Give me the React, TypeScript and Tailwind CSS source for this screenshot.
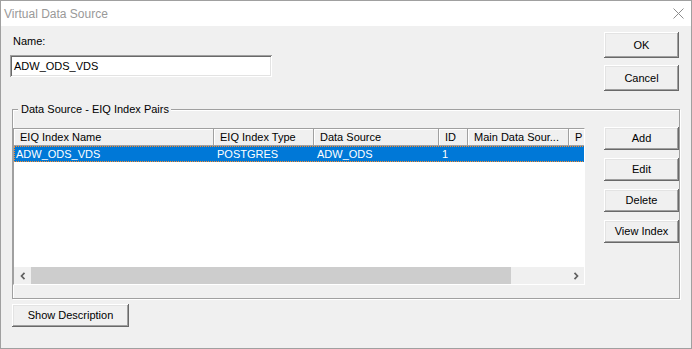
import React from "react";

type BtnProps = { label: string; className?: string };

function Button({ label, className }: BtnProps) {
  return (
    <button
      className={`flex items-center justify-center shrink-0 bg-[#f0f0f0] text-black shadow-[inset_-1px_-1px_#696969,inset_1px_1px_#ffffff,inset_-2px_-2px_#a0a0a0,inset_2px_2px_#e3e3e3] ${className ?? ""}`}
    >
      {label}
    </button>
  );
}

const columns = [
  { title: "EIQ Index Name", width: "w-[200px]", value: "ADW_ODS_VDS", pad: "pl-[2px]" },
  { title: "EIQ Index Type", width: "w-[100px]", value: "POSTGRES", pad: "pl-[3px]" },
  { title: "Data Source", width: "w-[125px]", value: "ADW_ODS", pad: "pl-[3px]" },
  { title: "ID", width: "w-[29px]", value: "1", pad: "pl-[3px]" },
  { title: "Main Data Sour...", width: "w-[101px]", value: "", pad: "pl-[3px]" },
  { title: "P", width: "w-[100px]", value: "", pad: "pl-[3px]" },
];

function Chevron({ dir }: { dir: "left" | "right" }) {
  return (
    <svg width="6" height="8" viewBox="0 0 6 8">
      <polyline
        points={dir === "left" ? "4.5,0.8 1.5,4 4.5,7.2" : "1.5,0.8 4.5,4 1.5,7.2"}
        fill="none"
        stroke="#606060"
        strokeWidth="1.7"
      />
    </svg>
  );
}

function ListView() {
  return (
    <div className="w-[572px] h-[157px] shrink-0 border border-t-[#a0a0a0] border-l-[#a0a0a0] border-r-white border-b-white bg-white flex flex-col overflow-hidden">
      {/* header */}
      <div className="flex h-[17px] shrink-0">
        {columns.map((c) => (
          <div
            key={c.title}
            className={`${c.width} shrink-0 h-full flex items-center pl-[6px] bg-[#f0f0f0] whitespace-nowrap shadow-[inset_-1px_-1px_#a0a0a0,inset_1px_1px_#ffffff]`}
          >
            {c.title}
          </div>
        ))}
      </div>
      {/* selected row */}
      <div className="flex h-[16px] shrink-0 w-[655px] bg-[#0078d7] text-white outline-1 outline-dotted outline-[#ff8c2a] -outline-offset-1">
        {columns.map((c) => (
          <div key={c.title} className={`${c.width} ${c.pad} shrink-0 h-full flex items-center whitespace-nowrap`}>
            {c.value}
          </div>
        ))}
      </div>
      <div className="flex-1" />
      {/* horizontal scrollbar */}
      <div className="h-[17px] shrink-0 flex bg-[#f0f0f0]">
        <div className="w-[17px] h-full flex items-center justify-center">
          <Chevron dir="left" />
        </div>
        <div className="w-[480px] h-full bg-[#cdcdcd]" />
        <div className="flex-1" />
        <div className="w-[17px] h-full flex items-center justify-center">
          <Chevron dir="right" />
        </div>
      </div>
    </div>
  );
}

export default function App() {
  return (
    <div className="w-[692px] h-[349px] border border-[#a0a0a0] bg-[#f0f0f0] flex flex-col overflow-hidden font-['Liberation_Sans',Arial,sans-serif] text-[11px] leading-[13px] text-black">
      {/* title bar */}
      <div className="h-[25px] shrink-0 bg-white flex items-center justify-between pl-[3px] pr-[7px]">
        <span className="text-[12px] leading-[14px] text-[#999999]">Virtual Data Source</span>
        <svg width="11" height="11" viewBox="0 0 11 11">
          <path d="M0.5 0.5 L10.5 10.5 M10.5 0.5 L0.5 10.5" stroke="#8c8c8c" strokeWidth="1" />
        </svg>
      </div>

      <div className="flex flex-col pl-[11px]">
        {/* name + ok/cancel */}
        <div className="h-[83px] w-[668px] flex">
          <div className="w-[592px] pt-[9px] flex flex-col">
            <div className="pl-[1px]">Name:</div>
            <div className="mt-[7px] -ml-[2px] w-[262px] h-[22px] bg-white flex items-center pl-[4px] shadow-[inset_1px_1px_#a0a0a0,inset_-1px_-1px_#ffffff,inset_2px_2px_#696969,inset_-2px_-2px_#e3e3e3]">
              ADW_ODS_VDS
            </div>
          </div>
          <div className="w-[75px] pt-[6px] flex flex-col gap-[7px]">
            <Button label="OK" className="w-[75px] h-[26px]" />
            <Button label="Cancel" className="w-[75px] h-[26px]" />
          </div>
        </div>

        {/* group box */}
        <div className="w-[668px] h-[190px] border border-[#a0a0a0] shadow-[inset_1px_1px_#ffffff,1px_1px_#ffffff] flex flex-col">
          <div className="-mt-[7px] ml-[5px] w-fit h-[13px] pl-[3px] pr-[2px] bg-[#f0f0f0]">
            Data Source - EIQ Index Pairs
          </div>
          <div className="mt-[12px] flex">
            <ListView />
            <div className="ml-[19px] -mt-[1px] w-[75px] flex flex-col gap-[8px]">
              <Button label="Add" className="w-[75px] h-[23px]" />
              <Button label="Edit" className="w-[75px] h-[23px]" />
              <Button label="Delete" className="w-[75px] h-[23px]" />
              <Button label="View Index" className="w-[75px] h-[23px]" />
            </div>
          </div>
        </div>

        <Button label="Show Description" className="mt-[5px] w-[117px] h-[23px]" />
      </div>
    </div>
  );
}
